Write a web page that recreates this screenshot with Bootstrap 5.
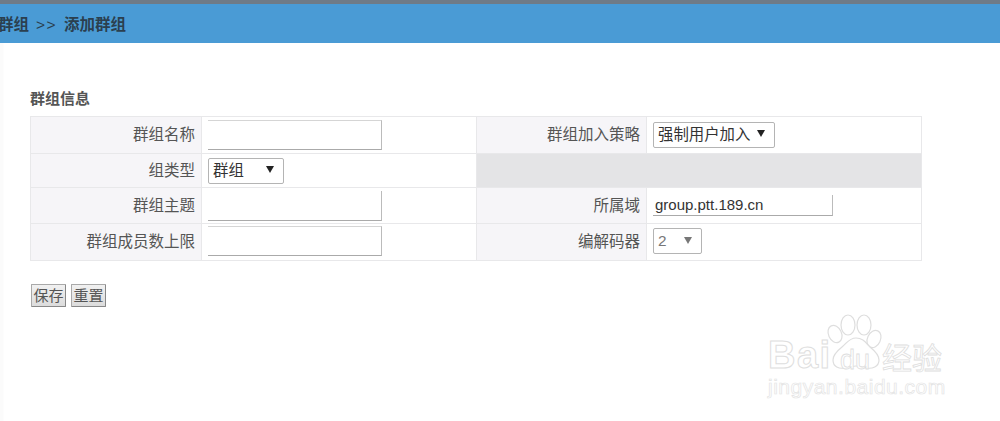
<!DOCTYPE html>
<html lang="zh-CN">
<head>
<meta charset="utf-8">
<title>添加群组</title>
<link href="https://cdn.jsdelivr.net/npm/bootstrap@5.3.0/dist/css/bootstrap.min.css" rel="stylesheet">
<style>
html,body{height:421px;overflow:hidden}
body{background:#fff;font-family:"Liberation Sans","Noto Sans CJK SC",sans-serif;font-size:15px;color:#444;position:relative}
.topline{height:4px;background:#6f7b87}
.crumbbar{height:39px;background:#4a9bd5;color:#2b3f4f;font-size:15.5px;font-weight:700;line-height:41px;margin-left:-2px;white-space:nowrap;box-shadow:0 1px 1px #d5e6f2}
.crumbsep{font-weight:400;letter-spacing:1.4px;margin:0 7px 0 7px}
.pagebody{padding:46px 79px 0 30px;height:378px;background:linear-gradient(90deg,#fbfbfb 3px,#fff 4px)}
.grouptitle{font-size:15px;font-weight:700;line-height:20px;margin:0 0 7px;color:#555}
.infotable{table-layout:fixed;width:891px;margin:0;border-collapse:collapse;--bs-table-bg:transparent;--bs-table-border-color:#e4e4e6}
.infotable>tbody>tr>*{border:1.5px solid #e8e8ea;padding:0;vertical-align:middle}
.infotable .lbl{width:171px;background:#f6f5f8;text-align:right;padding-right:6px;color:#555;font-size:15.5px;font-weight:400}
.infotable .lblnarrow{width:170px}
.infotable .val{width:275px;padding-left:6px;background:#fff}
.infotable .blank{background:#e4e4e6}
.r1{height:37px}.r2{height:34px}.r3{height:36px}.r4{height:37px}
.r4 .txtin,.r4 .selbox{margin-bottom:2px}
.txtin{display:block;background:#fff;color:#333;outline:0;padding:0 2px;font-size:15px;font-family:inherit;border:0;border-right:1px solid #bbb;border-bottom:1px solid #aaa;border-radius:0}
.wfull{width:174px;height:30px}
.withtop{border-top:1px solid #d5d5d5}
.wdom{width:180px;height:21px}
.selbox{appearance:none;-webkit-appearance:none;display:block;height:26px;border:1px solid #b4b4b4;border-radius:2px;padding:0 0 0 4px;color:#333;font-size:15.4px;font-family:inherit;background:#fff url("data:image/svg+xml,%3Csvg xmlns='http://www.w3.org/2000/svg' width='8' height='7'%3E%3Cpath d='M0 0h8L4 7z' fill='%23222'/%3E%3C/svg%3E") no-repeat}
.sel1{width:122px;background-position:103px 7px}
.sel2{width:76px;background-position:57px 7px}
.sel3{width:49px;color:#777;background-position:30px 8px;background-image:url("data:image/svg+xml,%3Csvg xmlns='http://www.w3.org/2000/svg' width='8' height='7'%3E%3Cpath d='M0 0h8L4 7z' fill='%23777'/%3E%3C/svg%3E")}
.actbar{margin-top:23px;gap:5px;padding-left:1px}
.plainbtn{width:35px;height:23px;padding:0;border:1px solid #a9a9a9;border-bottom-color:#888;border-right-color:#888;border-radius:1px;background:linear-gradient(#f1f1f1,#dcdcdc);color:#555;font-size:15px;line-height:21px;font-family:inherit}
.wm{position:absolute;left:765px;top:313px;width:185px;height:90px;pointer-events:none}
.wmtext{position:absolute;white-space:nowrap;-webkit-text-stroke:1px #dedede;font-family:"Liberation Sans",sans-serif;color:#fff}
.wmbai{left:3px;top:22px;font-size:38px;font-weight:700;letter-spacing:1.5px;line-height:40px}
.wmdu{left:75px;top:32px;font-size:27px;line-height:30px;-webkit-text-stroke:.8px #dedede}
.wmcn{left:117px;top:25px;font-size:30px;line-height:36px;font-family:"Noto Sans CJK SC",sans-serif;-webkit-text-stroke:.8px #dedede}
.wmurl{left:3px;top:62px;font-size:21px;line-height:24px;-webkit-text-stroke:.7px #e4e4e4;letter-spacing:.5px}
.wmpaw{position:absolute;left:0;top:0}
</style>
</head>
<body>
<div class="topline"></div>
<div class="crumbbar">群组<span class="crumbsep">&gt;&gt;</span>添加群组</div>
<main class="pagebody">
  <h2 class="grouptitle">群组信息</h2>
  <table class="table infotable">
    <tbody>
      <tr class="r1">
        <th class="lbl" scope="row">群组名称</th>
        <td class="val"><input class="txtin wfull withtop" type="text"></td>
        <th class="lbl lblnarrow" scope="row">群组加入策略</th>
        <td class="val"><select class="selbox sel1"><option>强制用户加入</option></select></td>
      </tr>
      <tr class="r2">
        <th class="lbl" scope="row">组类型</th>
        <td class="val"><select class="selbox sel2"><option>群组</option></select></td>
        <td class="blank" colspan="2"></td>
      </tr>
      <tr class="r3">
        <th class="lbl" scope="row">群组主题</th>
        <td class="val"><input class="txtin wfull" type="text"></td>
        <th class="lbl" scope="row">所属域</th>
        <td class="val"><input class="txtin wdom" type="text" value="group.ptt.189.cn"></td>
      </tr>
      <tr class="r4">
        <th class="lbl" scope="row">群组成员数上限</th>
        <td class="val"><input class="txtin wfull withtop" type="text"></td>
        <th class="lbl" scope="row">编解码器</th>
        <td class="val"><select class="selbox sel3" disabled><option>2</option></select></td>
      </tr>
    </tbody>
  </table>
  <div class="d-flex actbar">
    <button class="plainbtn" type="button">保存</button>
    <button class="plainbtn" type="button">重置</button>
  </div>
</main>
<div class="wm">
  <svg class="wmpaw" width="185" height="90" viewBox="0 0 185 90" fill="#fff" stroke="#dedede" stroke-width="1.2">
    <ellipse cx="70" cy="21" rx="6.5" ry="9" transform="rotate(-25 70 21)"/>
    <ellipse cx="83" cy="12" rx="7" ry="10"/>
    <ellipse cx="99" cy="12" rx="7" ry="10"/>
    <ellipse cx="109" cy="26" rx="6.5" ry="9" transform="rotate(25 109 26)"/>
    <path d="M91 25c7 0 10 5 14 9 5 4 9 8 9 13 0 7-7 9-13 8-4-1-7-2-10-2s-7 1-11 2c-6 1-12-1-12-8 0-5 4-9 9-13 5-4 7-9 14-9z"/>
  </svg>
  <span class="wmtext wmbai">Bai</span>
  <span class="wmtext wmdu">du</span>
  <span class="wmtext wmcn">经验</span>
  <span class="wmtext wmurl">jingyan.baidu.com</span>
</div>
<script src="https://cdn.jsdelivr.net/npm/bootstrap@5.3.0/dist/js/bootstrap.bundle.min.js"></script>
</body>
</html>
